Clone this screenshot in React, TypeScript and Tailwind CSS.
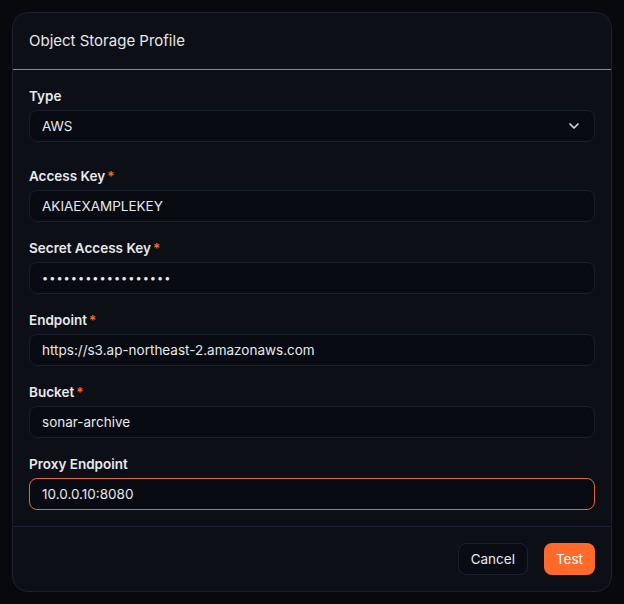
import { ChevronDown } from 'lucide-react'

type Field = { label: string; value: string; required?: boolean; focused?: boolean; secret?: boolean }

const fields: Field[] = [
  { label: 'Access Key', value: 'AKIAEXAMPLEKEY', required: true },
  { label: 'Secret Access Key', value: '••••••••••••••••••', required: true, secret: true },
  { label: 'Endpoint', value: 'https://s3.ap-northeast-2.amazonaws.com', required: true },
  { label: 'Bucket', value: 'sonar-archive', required: true },
  { label: 'Proxy Endpoint', value: '10.0.0.10:8080', focused: true },
]

function FieldLabel({ text, required }: { text: string; required?: boolean }) {
  return (
    <div className="flex h-5 items-center gap-0.5 text-[13.5px] font-semibold leading-5 text-[#e8eaee]">
      {text}
      {required && <span className="text-[#ff6a2b]">*</span>}
    </div>
  )
}

export default function App() {
  return (
    <div className="min-h-[604px] bg-[#08090d] p-3 font-['Inter','Noto_Sans',sans-serif]">
      <div className="w-[600px] rounded-2xl border border-[#1e2230] bg-[#0c0f16]">
        <div className="flex h-[56px] items-center px-4 text-[15px] text-[#e6e8ec]">Object Storage Profile</div>
        <div className="h-px bg-[#e36a32]" />

        <div className="flex flex-col gap-4 px-4 pb-4 pt-4">
          <div className="mb-2 flex flex-col gap-1">
            <FieldLabel text="Type" />
            <div className="flex h-8 items-center justify-between rounded-lg border border-[#1a1f2c] bg-[#080b11] px-3 text-[13.5px] text-[#e6e8ec]">
              AWS
              <ChevronDown className="h-4 w-4 text-[#d8dbe0]" strokeWidth={2.5} />
            </div>
          </div>

          {fields.map(f => (
            <div key={f.label} className="flex flex-col gap-1">
              <FieldLabel text={f.label} required={f.required} />
              <div
                className={
                  f.focused
                    ? 'flex h-8 items-center rounded-lg border border-[#e8662c] bg-[#080b11] px-3 text-[13.5px] text-[#e6e8ec]'
                    : 'flex h-8 items-center rounded-lg border border-[#1a1f2c] bg-[#080b11] px-3 text-[13.5px] text-[#e6e8ec]'
                }
              >
                {f.secret ? <span className="text-[11px] tracking-[1px]">{f.value}</span> : f.value}
              </div>
            </div>
          ))}
        </div>

        <div className="h-px bg-[#1c2236]" />
        <div className="flex items-center justify-end gap-4 px-4 py-4">
          <button className="h-8 rounded-lg border border-[#1c2130] bg-[#090c12] px-3 text-[13.5px] text-[#e6e8ec]">
            Cancel
          </button>
          <button className="h-8 rounded-lg bg-[#ff6a2b] px-3 text-[13.5px] text-white">Test</button>
        </div>
      </div>
    </div>
  )
}
